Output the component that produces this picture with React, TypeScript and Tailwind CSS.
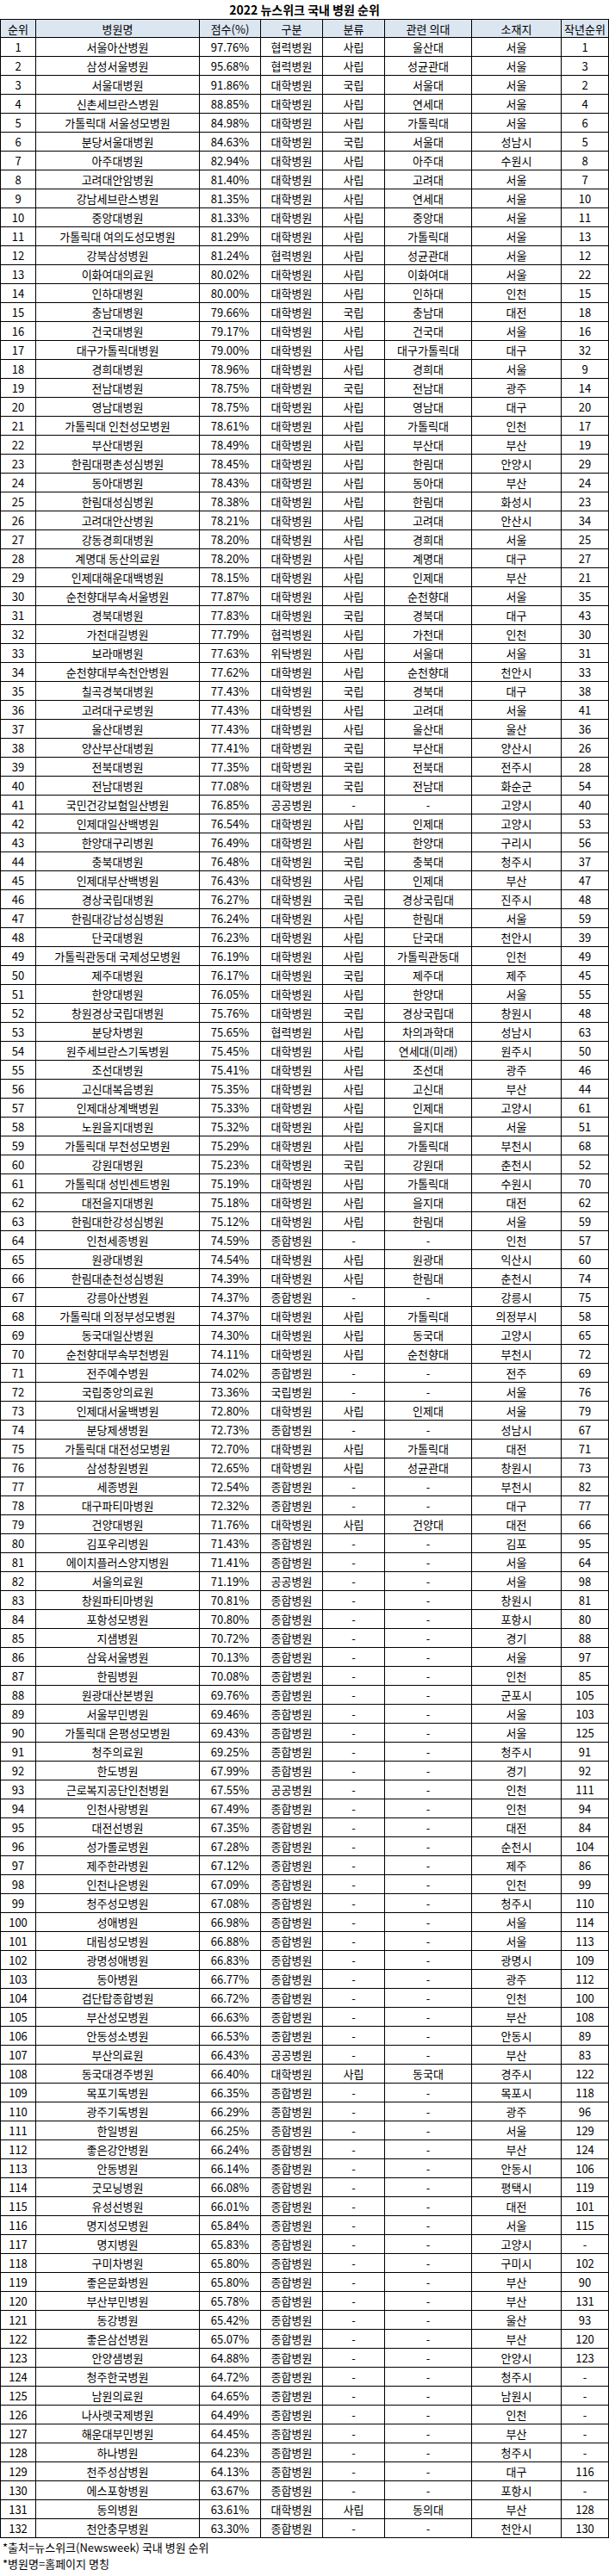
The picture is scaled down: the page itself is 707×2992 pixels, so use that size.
const raw = `1|서울아산병원|97.76%|협력병원|사립|울산대|서울|1
2|삼성서울병원|95.68%|협력병원|사립|성균관대|서울|3
3|서울대병원|91.86%|대학병원|국립|서울대|서울|2
4|신촌세브란스병원|88.85%|대학병원|사립|연세대|서울|4
5|가톨릭대 서울성모병원|84.98%|대학병원|사립|가톨릭대|서울|6
6|분당서울대병원|84.63%|대학병원|국립|서울대|성남시|5
7|아주대병원|82.94%|대학병원|사립|아주대|수원시|8
8|고려대안암병원|81.40%|대학병원|사립|고려대|서울|7
9|강남세브란스병원|81.35%|대학병원|사립|연세대|서울|10
10|중앙대병원|81.33%|대학병원|사립|중앙대|서울|11
11|가톨릭대 여의도성모병원|81.29%|대학병원|사립|가톨릭대|서울|13
12|강북삼성병원|81.24%|협력병원|사립|성균관대|서울|12
13|이화여대의료원|80.02%|대학병원|사립|이화여대|서울|22
14|인하대병원|80.00%|대학병원|사립|인하대|인천|15
15|충남대병원|79.66%|대학병원|국립|충남대|대전|18
16|건국대병원|79.17%|대학병원|사립|건국대|서울|16
17|대구가톨릭대병원|79.00%|대학병원|사립|대구가톨릭대|대구|32
18|경희대병원|78.96%|대학병원|사립|경희대|서울|9
19|전남대병원|78.75%|대학병원|국립|전남대|광주|14
20|영남대병원|78.75%|대학병원|사립|영남대|대구|20
21|가톨릭대 인천성모병원|78.61%|대학병원|사립|가톨릭대|인천|17
22|부산대병원|78.49%|대학병원|사립|부산대|부산|19
23|한림대평촌성심병원|78.45%|대학병원|사립|한림대|안양시|29
24|동아대병원|78.43%|대학병원|사립|동아대|부산|24
25|한림대성심병원|78.38%|대학병원|사립|한림대|화성시|23
26|고려대안산병원|78.21%|대학병원|사립|고려대|안산시|34
27|강동경희대병원|78.20%|대학병원|사립|경희대|서울|25
28|계명대 동산의료원|78.20%|대학병원|사립|계명대|대구|27
29|인제대해운대백병원|78.15%|대학병원|사립|인제대|부산|21
30|순천향대부속서울병원|77.87%|대학병원|사립|순천향대|서울|35
31|경북대병원|77.83%|대학병원|국립|경북대|대구|43
32|가천대길병원|77.79%|협력병원|사립|가천대|인천|30
33|보라매병원|77.63%|위탁병원|사립|서울대|서울|31
34|순천향대부속천안병원|77.62%|대학병원|사립|순천향대|천안시|33
35|칠곡경북대병원|77.43%|대학병원|국립|경북대|대구|38
36|고려대구로병원|77.43%|대학병원|사립|고려대|서울|41
37|울산대병원|77.43%|대학병원|사립|울산대|울산|36
38|양산부산대병원|77.41%|대학병원|국립|부산대|양산시|26
39|전북대병원|77.35%|대학병원|국립|전북대|전주시|28
40|전남대병원|77.08%|대학병원|국립|전남대|화순군|54
41|국민건강보험일산병원|76.85%|공공병원|-|-|고양시|40
42|인제대일산백병원|76.54%|대학병원|사립|인제대|고양시|53
43|한양대구리병원|76.49%|대학병원|사립|한양대|구리시|56
44|충북대병원|76.48%|대학병원|국립|충북대|청주시|37
45|인제대부산백병원|76.43%|대학병원|사립|인제대|부산|47
46|경상국립대병원|76.27%|대학병원|국립|경상국립대|진주시|48
47|한림대강남성심병원|76.24%|대학병원|사립|한림대|서울|59
48|단국대병원|76.23%|대학병원|사립|단국대|천안시|39
49|가톨릭관동대 국제성모병원|76.19%|대학병원|사립|가톨릭관동대|인천|49
50|제주대병원|76.17%|대학병원|국립|제주대|제주|45
51|한양대병원|76.05%|대학병원|사립|한양대|서울|55
52|창원경상국립대병원|75.76%|대학병원|국립|경상국립대|창원시|48
53|분당차병원|75.65%|협력병원|사립|차의과학대|성남시|63
54|원주세브란스기독병원|75.45%|대학병원|사립|연세대(미래)|원주시|50
55|조선대병원|75.41%|대학병원|사립|조선대|광주|46
56|고신대복음병원|75.35%|대학병원|사립|고신대|부산|44
57|인제대상계백병원|75.33%|대학병원|사립|인제대|고양시|61
58|노원을지대병원|75.32%|대학병원|사립|을지대|서울|51
59|가톨릭대 부천성모병원|75.29%|대학병원|사립|가톨릭대|부천시|68
60|강원대병원|75.23%|대학병원|국립|강원대|춘천시|52
61|가톨릭대 성빈센트병원|75.19%|대학병원|사립|가톨릭대|수원시|70
62|대전을지대병원|75.18%|대학병원|사립|을지대|대전|62
63|한림대한강성심병원|75.12%|대학병원|사립|한림대|서울|59
64|인천세종병원|74.59%|종합병원|-|-|인천|57
65|원광대병원|74.54%|대학병원|사립|원광대|익산시|60
66|한림대춘천성심병원|74.39%|대학병원|사립|한림대|춘천시|74
67|강릉아산병원|74.37%|종합병원|-|-|강릉시|75
68|가톨릭대 의정부성모병원|74.37%|대학병원|사립|가톨릭대|의정부시|58
69|동국대일산병원|74.30%|대학병원|사립|동국대|고양시|65
70|순천향대부속부천병원|74.11%|대학병원|사립|순천향대|부천시|72
71|전주예수병원|74.02%|종합병원|-|-|전주|69
72|국립중앙의료원|73.36%|국립병원|-|-|서울|76
73|인제대서울백병원|72.80%|대학병원|사립|인제대|서울|79
74|분당제생병원|72.73%|종합병원|-|-|성남시|67
75|가톨릭대 대전성모병원|72.70%|대학병원|사립|가톨릭대|대전|71
76|삼성창원병원|72.65%|대학병원|사립|성균관대|창원시|73
77|세종병원|72.54%|종합병원|-|-|부천시|82
78|대구파티마병원|72.32%|종합병원|-|-|대구|77
79|건양대병원|71.76%|대학병원|사립|건양대|대전|66
80|김포우리병원|71.43%|종합병원|-|-|김포|95
81|에이치플러스양지병원|71.41%|종합병원|-|-|서울|64
82|서울의료원|71.19%|공공병원|-|-|서울|98
83|창원파티마병원|70.81%|종합병원|-|-|창원시|81
84|포항성모병원|70.80%|종합병원|-|-|포항시|80
85|지샘병원|70.72%|종합병원|-|-|경기|88
86|삼육서울병원|70.13%|종합병원|-|-|서울|97
87|한림병원|70.08%|종합병원|-|-|인천|85
88|원광대산본병원|69.76%|종합병원|-|-|군포시|105
89|서울부민병원|69.46%|종합병원|-|-|서울|103
90|가톨릭대 은평성모병원|69.43%|종합병원|-|-|서울|125
91|청주의료원|69.25%|종합병원|-|-|청주시|91
92|한도병원|67.99%|종합병원|-|-|경기|92
93|근로복지공단인천병원|67.55%|공공병원|-|-|인천|111
94|인천사랑병원|67.49%|종합병원|-|-|인천|94
95|대전선병원|67.35%|종합병원|-|-|대전|84
96|성가롤로병원|67.28%|종합병원|-|-|순천시|104
97|제주한라병원|67.12%|종합병원|-|-|제주|86
98|인천나은병원|67.09%|종합병원|-|-|인천|99
99|청주성모병원|67.08%|종합병원|-|-|청주시|110
100|성애병원|66.98%|종합병원|-|-|서울|114
101|대림성모병원|66.88%|종합병원|-|-|서울|113
102|광명성애병원|66.83%|종합병원|-|-|광명시|109
103|동아병원|66.77%|종합병원|-|-|광주|112
104|검단탑종합병원|66.72%|종합병원|-|-|인천|100
105|부산성모병원|66.63%|종합병원|-|-|부산|108
106|안동성소병원|66.53%|종합병원|-|-|안동시|89
107|부산의료원|66.43%|공공병원|-|-|부산|83
108|동국대경주병원|66.40%|대학병원|사립|동국대|경주시|122
109|목포기독병원|66.35%|종합병원|-|-|목포시|118
110|광주기독병원|66.29%|종합병원|-|-|광주|96
111|한일병원|66.25%|종합병원|-|-|서울|129
112|좋은강안병원|66.24%|종합병원|-|-|부산|124
113|안동병원|66.14%|종합병원|-|-|안동시|106
114|굿모닝병원|66.08%|종합병원|-|-|평택시|119
115|유성선병원|66.01%|종합병원|-|-|대전|101
116|명지성모병원|65.84%|종합병원|-|-|서울|115
117|명지병원|65.83%|종합병원|-|-|고양시|-
118|구미차병원|65.80%|종합병원|-|-|구미시|102
119|좋은문화병원|65.80%|종합병원|-|-|부산|90
120|부산부민병원|65.78%|종합병원|-|-|부산|131
121|동강병원|65.42%|종합병원|-|-|울산|93
122|좋은삼선병원|65.07%|종합병원|-|-|부산|120
123|안양샘병원|64.88%|종합병원|-|-|안양시|123
124|청주한국병원|64.72%|종합병원|-|-|청주시|-
125|남원의료원|64.65%|종합병원|-|-|남원시|-
126|나사렛국제병원|64.49%|종합병원|-|-|인천|-
127|해운대부민병원|64.45%|종합병원|-|-|부산|-
128|하나병원|64.23%|종합병원|-|-|청주시|-
129|천주성삼병원|64.13%|종합병원|-|-|대구|116
130|에스포항병원|63.67%|종합병원|-|-|포항시|-
131|동의병원|63.61%|대학병원|사립|동의대|부산|128
132|천안충무병원|63.30%|종합병원|-|-|천안시|130`;

const rows = raw.split('\n').map((line) => line.split('|'));

const headers = ['순위', '병원명', '점수(%)', '구분', '분류', '관련 의대', '소재지', '작년순위'];

const gridCols = 'grid grid-cols-[41px_190px_71px_72px_72px_101px_104px_55px] border-l border-black';
const cell = 'flex items-center justify-center border-r border-black whitespace-nowrap overflow-hidden';

export default function App() {
  return (
    <div className="w-[707px] bg-white text-black text-[13px] leading-none font-['Noto_Sans_CJK_KR',sans-serif]">
      <div className="flex h-[22px] items-center justify-center text-[14px] font-bold">
        2022 뉴스위크 국내 병원 순위
      </div>

      <div>
        <div className={`${gridCols} h-[22px] border-y border-black bg-[#dce6f1]`}>
          {headers.map((h) => (
            <div key={h} className={cell}>
              {h}
            </div>
          ))}
        </div>
        {rows.map((r) => (
          <div key={r[0]} className={`${gridCols} h-[22px] border-b border-black`}>
            {r.map((v, i) => (
              <div key={i} className={cell}>
                {v}
              </div>
            ))}
          </div>
        ))}
      </div>

      <div className="pl-[3px] pt-[1px] leading-[19px]">
        <p>*출처=뉴스위크(Newsweek) 국내 병원 순위</p>
        <p>*병원명=홈페이지 명칭</p>
      </div>
    </div>
  );
}
